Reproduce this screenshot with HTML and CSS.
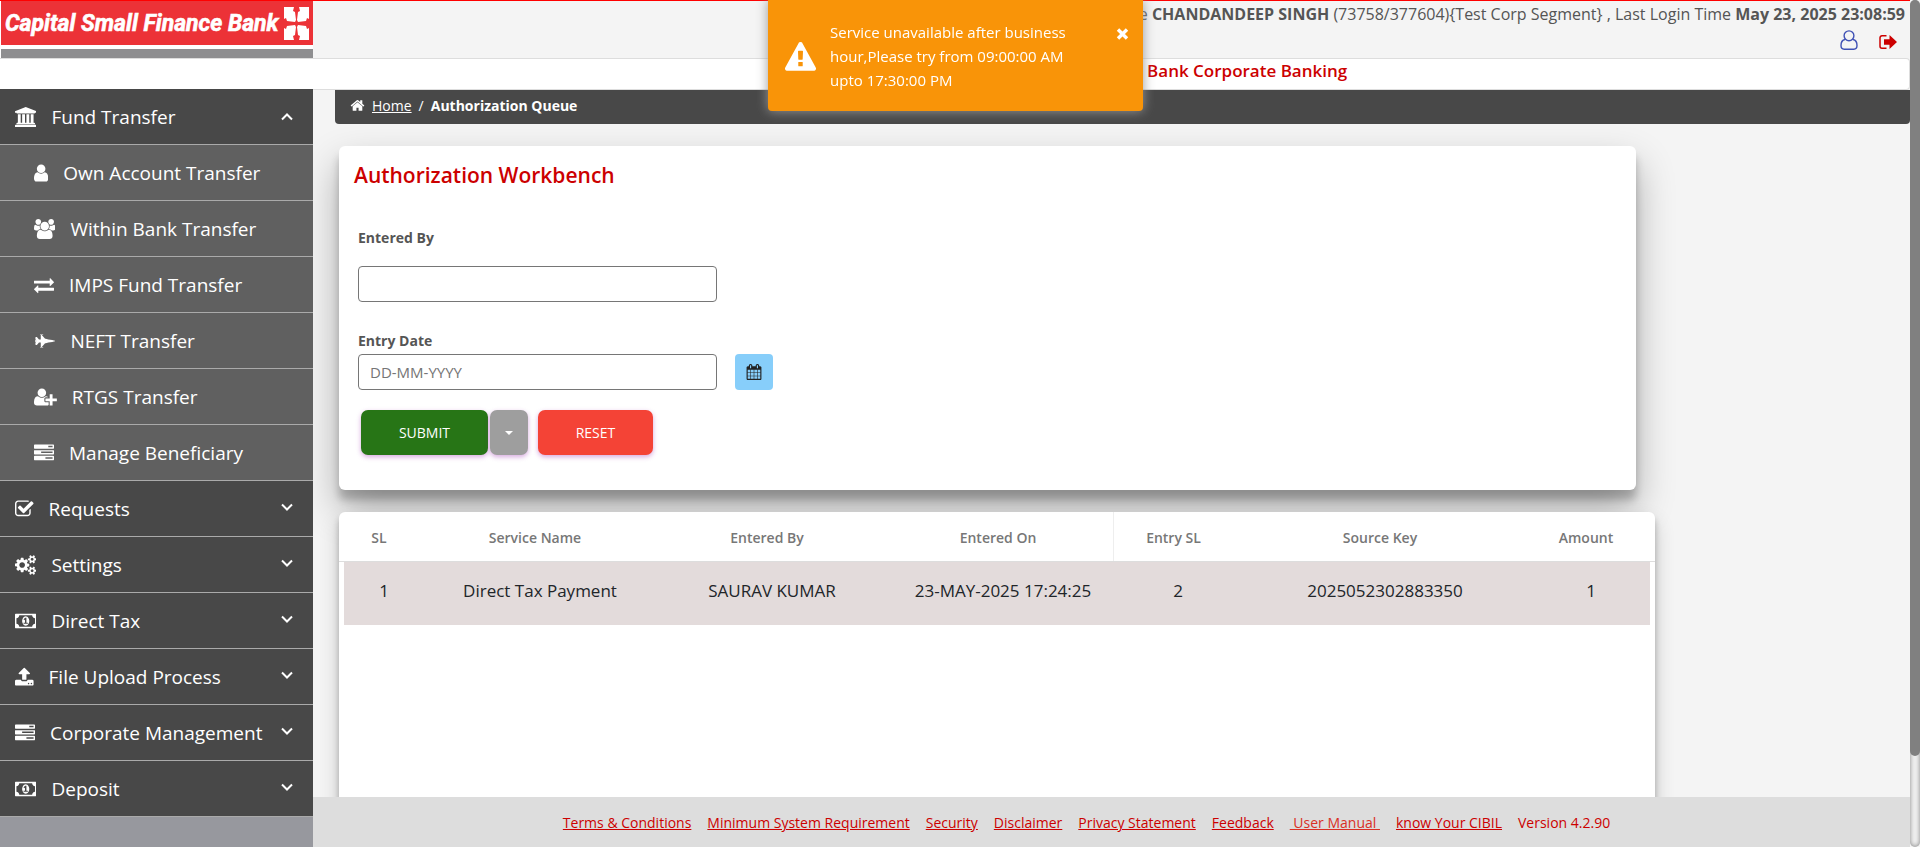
FILE: index.html
```html
<!DOCTYPE html>
<html lang="en">
<head>
<meta charset="utf-8">
<title>Authorization Queue</title>
<link rel="stylesheet" href="styles.css">
</head>
<body>
<svg class="sprite" aria-hidden="true">
  <symbol id="chev-down" viewBox="0 0 12 8"><path d="M1 1.500l5 5 5-5" fill="none" stroke="currentColor" stroke-width="2"/></symbol>
  <symbol id="chev-up" viewBox="0 0 12 8"><path d="M1 6.500l5-5 5 5" fill="none" stroke="currentColor" stroke-width="2"/></symbol>
  <symbol id="tasks" viewBox="0 0 1792 1792"><path d="M1024 1408h640v-128h-640v128zm-384-512h1024v-128h-1024v128zm640-512h384v-128h-384v128zm512 832v256q0 26-19 45t-45 19h-1664q-26 0-45-19t-19-45v-256q0-26 19-45t45-19h1664q26 0 45 19t19 45zm0-512v256q0 26-19 45t-45 19h-1664q-26 0-45-19t-19-45v-256q0-26 19-45t45-19h1664q26 0 45 19t19 45zm0-512v256q0 26-19 45t-45 19h-1664q-26 0-45-19t-19-45v-256q0-26 19-45t45-19h1664q26 0 45 19t19 45z"/></symbol>
  <symbol id="money" viewBox="0 0 1920 1792"><path d="M768 1152h384v-96h-128v-448h-114l-148 137 77 80q42-37 55-57h2v288h-128v96zm512-256q0 70-21 142t-59.500 134-101.500 101-138 39-138-39-101.500-101-59.500-134-21-142 21-142 59.500-134 101.500-101 138-39 138 39 101.500 101 59.500 134 21 142zm512 256v-512q-106 0-181-75t-75-181h-1152q0 106-75 181t-181 75v512q106 0 181 75t75 181h1152q0-106 75-181t181-75zm128-832v1152q0 26-19 45t-45 19h-1792q-26 0-45-19t-19-45v-1152q0-26 19-45t45-19h1792q26 0 45 19t19 45z"/></symbol>
</svg>
<div class="window">
  <div class="page">
    <header class="topbar">
      <svg class="logo" viewBox="0 0 313 58" role="img" aria-label="Capital Small Finance Bank">
        <rect width="313" height="58" fill="#fff"/>
        <rect x="1" width="312" height="44" fill="#ec3237"/>
        <rect x="1" y="48" width="312" height="10" fill="#8e8e90"/>
        <text x="5" y="30" class="logo-text">Capital Small Finance Bank</text>
        <g fill="#fff">
          <path d="M284 6h10l-1 4 2 1 1 8-1 2-8-1-1-3-2 1z"/>
          <path d="M309 6h-10l1 4-2 1-1 8 1 2 8-1 1-3 2 1z"/>
          <path d="M284 39h10l-1-4 2-1 1-8-1-2-8 1-1 3-2-1z"/>
          <path d="M309 39h-10l1-4-2-1-1-8 1-2 8 1 1 3 2-1z"/>
        </g>
      </svg>
      <div class="account">
        <p class="welcome">Welcome <strong>CHANDANDEEP SINGH</strong> (73758/377604){Test Corp Segment} , Last Login Time <strong>May 23, 2025 23:08:59</strong></p>
        <div class="account-actions">
          <a href="#" class="profile" aria-label="Profile"><svg viewBox="0 0 18 20"><circle cx="9" cy="5.800" r="4.900"/><path d="M5 9.500C2.200 10 1 12.500 1 15.500c0 2.500 1 3.700 3.200 3.700h9.600c2.200 0 3.200-1.200 3.200-3.700 0-3-1.200-5.500-4-6"/></svg></a>
          <a href="#" class="logout" aria-label="Log out"><svg viewBox="0 0 18 14"><path d="M7.500.800H3A2 2 0 0 0 1 2.800v8.400a2 2 0 0 0 2 2h4.500" fill="none" stroke="currentColor" stroke-width="1.500"/><path d="M5 4.300h5.500V0L18 7l-7.500 7V9.700H5z" fill="currentColor"/></svg></a>
        </div>
      </div>
    </header>
    <div class="titleband"><h1>Welcome to Capital Small Finance Bank Corporate Banking</h1></div>

    <div class="body">
      <nav class="sidebar" aria-label="Main menu">
        <a href="#"><svg class="i" viewBox="0 0 1920 1792"><path d="M960 0l960 384v128h-128q0 26-20.500 45t-48.500 19H197q-28 0-48.500-19T128 512H0V384zM256 640h256v768h128V640h256v768h128V640h256v768h128V640h256v768h59q28 0 48.500 19t20.500 45v64H128v-64q0-26 20.500-45t48.500-19h59V640zm1595 960q28 0 48.500 19t20.500 45v128H0v-128q0-26 20.500-45t48.500-19h1782z"/></svg><span>Fund Transfer</span><svg class="chev open"><use href="#chev-up"/></svg></a>
        <a href="#" class="sub"><svg class="i" viewBox="256 0 1280 1792"><path d="M1536 1399q0 109-62.500 187t-150.500 78h-854q-88 0-150.500-78t-62.500-187q0-85 8.500-160.500t31.500-152 58.500-131 94-89 134.500-34.500q131 128 313 128t313-128q76 0 134.500 34.500t94 89 58.500 131 31.500 152 8.500 160.500zm-256-887q0 159-112.500 271.500t-271.500 112.500-271.500-112.500-112.500-271.500 112.500-271.500 271.500-112.500 271.500 112.500 112.500 271.500z"/></svg><span>Own Account Transfer</span></a>
        <a href="#" class="sub"><svg class="i" viewBox="0 0 1920 1792"><path d="M593 896q-162 5-265 128h-134q-82 0-138-40.500t-56-118.500q0-353 124-353 6 0 43.500 21t97.500 42.500 119 21.500q67 0 133-23-5 37-5 66 0 139 81 256zm1071 637q0 120-73 189.500t-194 69.500h-874q-121 0-194-69.500t-73-189.500q0-53 3.500-103.500t14-109 26.500-108.500 43-97.500 62-81 85.500-53.500 111.500-20q10 0 43 21.500t73 48 107 48 135 21.500 135-21.500 107-48 73-48 43-21.500q61 0 111.500 20t85.500 53.500 62 81 43 97.500 26.500 108.500 14 109 3.500 103.500zm-1024-1277q0 106-75 181t-181 75-181-75-75-181 75-181 181-75 181 75 75 181zm704 384q0 159-112.500 271.500t-271.500 112.500-271.500-112.500-112.500-271.500 112.500-271.500 271.500-112.500 271.500 112.500 112.500 271.500zm576 225q0 78-56 118.500t-138 40.500h-134q-103-123-265-128 81-117 81-256 0-29-5-66 66 23 133 23 59 0 119-21.500t97.500-42.500 43.500-21q124 0 124 353zm-128-609q0 106-75 181t-181 75-181-75-75-181 75-181 181-75 181 75 75 181z"/></svg><span>Within Bank Transfer</span></a>
        <a href="#" class="sub"><svg class="i" viewBox="0 0 1792 1792"><path d="M1792 1184v192q0 13-9.500 22.500t-22.500 9.500h-1376v192q0 13-9.500 22.500t-22.500 9.500q-12 0-24-10l-319-320q-9-9-9-22 0-14 9-23l320-320q9-9 23-9 13 0 22.500 9.500t9.500 22.500v192h1376q13 0 22.500 9.500t9.500 22.500zm0-544q0 14-9 23l-320 320q-9 9-23 9-13 0-22.500-9.500t-9.500-22.500v-192h-1376q-13 0-22.500-9.500t-9.500-22.500v-192q0-13 9.500-22.500t22.500-9.500h1376v-192q0-14 9-23t23-9q12 0 24 10l319 319q9 9 9 23z"/></svg><span>IMPS Fund Transfer</span></a>
        <a href="#" class="sub"><svg class="i" viewBox="0 0 1920 1792"><path d="M1920 896q-1 32-288 96l-352 32-224 64h-64l-293 352h69q26 0 45 4.500t19 11.500-19 11.500-45 4.500h-224v-32h64v-416h-160l-192 224h-96l-32-32v-192h32v-32h128v-8l-192-24v-128l192-24v-8h-128v-32h-32v-192l32-32h96l192 224h160v-416h-64v-32h224q26 0 45 4.500t19 11.500-19 11.500-45 4.500h-69l293 352h64l224 64 352 32q261 58 287 93z"/></svg><span>NEFT Transfer</span></a>
        <a href="#" class="sub"><svg class="i" viewBox="0 0 2048 1792"><path d="M704 896q-159 0-271.500-112.500t-112.500-271.500 112.500-271.500 271.500-112.500 271.500 112.500 112.500 271.500-112.500 271.500-271.500 112.500zm960 128h352q13 0 22.500 9.500t9.500 22.500v192q0 13-9.500 22.500t-22.500 9.500h-352v352q0 13-9.500 22.500t-22.500 9.500h-192q-13 0-22.500-9.500t-9.500-22.500v-352h-352q-13 0-22.500-9.500t-9.500-22.500v-192q0-13 9.500-22.500t22.500-9.500h352v-352q0-13 9.500-22.500t22.500-9.500h192q13 0 22.500 9.500t9.500 22.500v352zm-736 224q0 52 38 90t90 38h256v238q-68 50-171 50h-874q-121 0-194-69t-73-190q0-53 3.500-103.500t14-109 26.500-108.500 43-97.500 62-81 85.500-53.500 111.500-20q19 0 39 17 79 61 154.500 91.500t164.500 30.500 164.500-30.500 154.500-91.500q20-17 39-17 132 0 217 96h-223q-52 0-90 38t-38 90v192z"/></svg><span>RTGS Transfer</span></a>
        <a href="#" class="sub"><svg class="i" viewBox="0 0 1792 1792"><use href="#tasks"/></svg><span>Manage Beneficiary</span></a>
        <a href="#"><svg class="i" viewBox="64 0 1664 1792"><path d="M1472 930v318q0 119-84.500 203.500t-203.500 84.500h-832q-119 0-203.500-84.500t-84.500-203.500v-832q0-119 84.500-203.500t203.500-84.500h832q63 0 117 25 15 7 18 23 3 17-9 29l-49 49q-10 10-23 10-3 0-9-2-23-6-45-6h-832q-66 0-113 47t-47 113v832q0 66 47 113t113 47h832q66 0 113-47t47-113v-254q0-13 9-22l64-64q10-10 23-10 6 0 12 3 20 8 20 29zm231-489l-814 814q-24 24-57 24t-57-24l-430-430q-24-24-24-57t24-57l110-110q24-24 57-24t57 24l263 263 647-647q24-24 57-24t57 24l110 110q24 24 24 57t-24 57z"/></svg><span>Requests</span><svg class="chev"><use href="#chev-down"/></svg></a>
        <a href="#"><svg class="i" viewBox="0 0 1920 1792"><path d="M896 896q0-106-75-181t-181-75-181 75-75 181 75 181 181 75 181-75 75-181zm768 512q0-52-38-90t-90-38-90 38-38 90q0 53 37.500 90.500t90.500 37.500 90.500-37.500 37.500-90.500zm0-1024q0-52-38-90t-90-38-90 38-38 90q0 53 37.500 90.500t90.500 37.500 90.500-37.500 37.500-90.500zm-384 421v185q0 10-7 19.500t-16 10.500l-155 24q-11 35-32 76 34 48 90 115 7 11 7 20 0 12-7 19-23 30-82.500 89.500t-78.500 59.500q-11 0-21-7l-115-90q-37 19-77 31-11 108-23 155-7 24-30 24h-186q-11 0-20-7.500t-10-17.500l-23-153q-34-10-75-31l-118 89q-7 7-20 7-11 0-21-8-144-133-144-160 0-9 7-19 10-14 41-53t47-61q-23-44-35-82l-152-24q-10-1-17-9.500t-7-19.500v-185q0-10 7-19.500t16-10.500l155-24q11-35 32-76-34-48-90-115-7-11-7-20 0-12 7-20 22-30 82-89t79-59q11 0 21 7l115 90q34-18 77-32 11-108 23-154 7-24 30-24h186q11 0 20 7.500t10 17.500l23 153q34 10 75 31l118-89q8-7 20-7 11 0 21 8 144 133 144 160 0 8-7 19-12 16-42 54t-45 60q23 48 34 82l152 23q10 2 17 10.500t7 19.500zm640 533v140q0 16-149 31-12 27-30 52 51 113 51 138 0 4-4 7-122 71-124 71-8 0-46-47t-52-68q-20 2-30 2t-30-2q-14 21-52 68t-46 47q-2 0-124-71-4-3-4-7 0-25 51-138-18-25-30-52-149-15-149-31v-140q0-16 149-31 13-29 30-52-51-113-51-138 0-4 4-7 4-2 35-20t59-34 30-16q8 0 46 46.500t52 67.500q20-2 30-2t30 2q51-71 92-112l6-2q4 0 124 70 4 3 4 7 0 25-51 138 17 23 30 52 149 15 149 31zm0-1024v140q0 16-149 31-12 27-30 52 51 113 51 138 0 4-4 7-122 71-124 71-8 0-46-47t-52-68q-20 2-30 2t-30-2q-14 21-52 68t-46 47q-2 0-124-71-4-3-4-7 0-25 51-138-18-25-30-52-149-15-149-31v-140q0-16 149-31 13-29 30-52-51-113-51-138 0-4 4-7 4-2 35-20t59-34 30-16q8 0 46 46.500t52 67.500q20-2 30-2t30 2q51-71 92-112l6-2q4 0 124 70 4 3 4 7 0 25-51 138 17 23 30 52 149 15 149 31z"/></svg><span>Settings</span><svg class="chev"><use href="#chev-down"/></svg></a>
        <a href="#"><svg class="i" viewBox="0 0 1920 1792"><use href="#money"/></svg><span>Direct Tax</span><svg class="chev"><use href="#chev-down"/></svg></a>
        <a href="#"><svg class="i" viewBox="64 0 1664 1792"><path d="M1344 1472q0-26-19-45t-45-19-45 19-19 45 19 45 45 19 45-19 19-45zm256 0q0-26-19-45t-45-19-45 19-19 45 19 45 45 19 45-19 19-45zm128-224v320q0 40-28 68t-68 28h-1472q-40 0-68-28t-28-68v-320q0-40 28-68t68-28h427q21 56 70.500 92t110.500 36h256q61 0 110.500-36t70.500-92h427q40 0 68 28t28 68zm-325-648q-17 40-59 40h-256v448q0 26-19 45t-45 19h-256q-26 0-45-19t-19-45v-448h-256q-42 0-59-40-17-39 14-69l448-448q18-19 45-19t45 19l448 448q31 30 14 69z"/></svg><span>File Upload Process</span><svg class="chev"><use href="#chev-down"/></svg></a>
        <a href="#"><svg class="i" viewBox="0 0 1792 1792"><use href="#tasks"/></svg><span>Corporate Management</span><svg class="chev"><use href="#chev-down"/></svg></a>
        <a href="#"><svg class="i" viewBox="0 0 1920 1792"><use href="#money"/></svg><span>Deposit</span><svg class="chev"><use href="#chev-down"/></svg></a>
      </nav>

      <div class="content">
        <main class="main">
          <nav class="breadcrumb" aria-label="Breadcrumb">
            <svg viewBox="0 0 1792 1792"><path d="M1472 992v480q0 26-19 45t-45 19h-384v-384h-256v384h-384q-26 0-45-19t-19-45v-480l1-6 575-474 575 474q1 2 1 6zm223-69l-62 74q-8 9-21 11h-3q-13 0-21-7l-692-577-692 577q-12 8-24 7-13-2-21-11l-62-74q-8-10-7-23.500t11-21.500l719-599q32-26 76-26t76 26l244 204v-195q0-14 9-23t23-9h192q14 0 23 9t9 23v408l219 182q10 8 11 21.500t-7 23.500z"/></svg>
            <a href="#">Home</a><span>/</span><strong>Authorization Queue</strong>
          </nav>

          <form class="card workbench">
            <h2>Authorization Workbench</h2>
            <div class="field">
              <label for="entered-by">Entered By</label>
              <input type="text" id="entered-by" class="spaced">
            </div>
            <div class="field">
              <label for="entry-date">Entry Date</label>
              <div class="date-row">
                <input type="text" id="entry-date" placeholder="DD-MM-YYYY">
                <button type="button" class="calendar" aria-label="Pick a date"><svg viewBox="0 0 1792 1792"><path d="M192 1664h288v-288h-288v288zm352 0h320v-288h-320v288zm-352-352h288v-320h-288v320zm352 0h320v-320h-320v320zm-352-384h288v-288h-288v288zm736 736h320v-288h-320v288zm-384-736h320v-288h-320v288zm768 736h288v-288h-288v288zm-384-352h320v-320h-320v320zm-352-864v-288q0-13-9.500-22.500t-22.500-9.500h-64q-13 0-22.500 9.500t-9.500 22.500v288q0 13 9.500 22.500t22.500 9.500h64q13 0 22.500-9.500t9.500-22.500zm736 864h288v-320h-288v320zm-384-384h320v-288h-320v288zm384 0h288v-288h-288v288zm32-480v-288q0-13-9.500-22.500t-22.500-9.500h-64q-13 0-22.500 9.500t-9.500 22.500v288q0 13 9.500 22.500t22.500 9.500h64q13 0 22.500-9.500t9.500-22.500zm384-64v1280q0 52-38 90t-90 38h-1408q-52 0-90-38t-38-90v-1280q0-52 38-90t90-38h128v-96q0-66 47-113t113-47h64q66 0 113 47t47 113v96h384v-96q0-66 47-113t113-47h64q66 0 113 47t47 113v96h128q52 0 90 38t38 90z"/></svg></button>
              </div>
            </div>
            <div class="actions">
              <button type="button" class="btn submit">SUBMIT</button>
              <button type="button" class="btn more" aria-label="More options"><svg viewBox="0 0 8 4"><path d="M0 0h8L4 4z"/></svg></button>
              <button type="reset" class="btn reset">RESET</button>
            </div>
          </form>

          <section class="card results" aria-label="Queue entries">
            <table>
              <thead>
                <tr><th>SL</th><th>Service Name</th><th>Entered By</th><th>Entered On</th><th class="ruled">Entry SL</th><th>Source Key</th><th>Amount</th></tr>
              </thead>
              <tbody>
                <tr><td>1</td><td>Direct Tax Payment</td><td>SAURAV KUMAR</td><td>23-MAY-2025 17:24:25</td><td>2</td><td>2025052302883350</td><td>1</td></tr>
              </tbody>
            </table>
          </section>
        </main>
        <footer class="footer">
          <a href="#">Terms &amp; Conditions</a>
          <a href="#">Minimum System Requirement</a>
          <a href="#">Security</a>
          <a href="#">Disclaimer</a>
          <a href="#">Privacy Statement</a>
          <a href="#">Feedback</a>
          <a href="#" class="manual">&nbsp;User Manual&nbsp;</a>
          <a href="#">know Your CIBIL</a>
          <span>Version 4.2.90</span>
        </footer>
      </div>
    </div>
  </div>
  <div class="scroll-track"><div class="scroll-thumb"></div></div>
</div>

<div class="toast" role="alert">
  <svg class="warn" viewBox="0 0 1792 1792"><path d="M1024 1375v-190q0-14-9.500-23.500t-22.500-9.500h-192q-13 0-22.500 9.500t-9.500 23.500v190q0 14 9.500 23.500t22.500 9.500h192q13 0 22.500-9.500t9.500-23.500zm-2-374l18-459q0-12-10-19-13-11-24-11h-220q-11 0-24 11-10 7-10 21l17 457q0 10 10 16.500t24 6.500h185q14 0 23.500-6.500t10.500-16.500zm-14-934l768 1408q35 63-2 126-17 29-46.500 46t-63.500 17h-1536q-34 0-63.500-17t-46.500-46q-37-63-2-126l768-1408q17-31 47-49t65-18 65 18 47 49z"/></svg>
  <p>Service unavailable after business hour,Please try from 09:00:00 AM upto 17:30:00 PM</p>
  <button type="button" class="close" aria-label="Close"><svg viewBox="0 0 12 12"><path d="M1.500 1.500l9 9M10.500 1.500l-9 9" stroke="#fff" stroke-width="3.400"/></svg></button>
</div>
</body>
</html>
```

FILE: styles.css
```css
* { box-sizing: border-box; }

body {
  margin: 0;
  font-family: "Open Sans", "Noto Sans", sans-serif;
  font-size: 15px;
  color: #555;
  background: #f4f4f4;
}

p, h1, h2 { margin: 0; }
button, input { font: inherit; }
a { color: inherit; }
svg { display: block; }
.sprite { display: none; }

.window { display: flex; height: 100vh; overflow: hidden; }
.page { flex: 1; min-width: 0; display: flex; flex-direction: column; }

/* Header */
.topbar {
  display: flex;
  justify-content: space-between;
  height: 58px;
  border-top: 1px solid #f00;
  background: #f4f4f4;
}
.logo { width: 313px; height: 58px; flex: none; }
.logo-text {
  font-family: Roboto, "Liberation Sans", sans-serif;
  font-weight: 700;
  font-style: italic;
  font-size: 23px;
  fill: #fff;
  stroke: #fff;
  stroke-width: 0.6px;
}
.account { padding-right: 5px; }
.welcome { font-size: 16px; line-height: 26px; white-space: nowrap; }
.account-actions { display: flex; justify-content: flex-end; align-items: flex-end; gap: 21px; padding-right: 8px; }
.profile svg { width: 18px; height: 20px; margin-top: 3px; fill: none; stroke: #3f51b5; stroke-width: 1.4; }
.logout svg { width: 18px; height: 14px; margin-bottom: 1px; color: #c00; }

.titleband {
  height: 32px;
  padding-left: 313px;
  padding-right: 8px;
  border: 1px solid #ddd;
  border-left: 0;
  border-radius: 0 4px 4px 0;
  background: #fff;
}
.titleband h1 {
  font-size: 17px;
  line-height: 24px;
  font-weight: 600;
  text-align: center;
  color: #c00;
}

/* Sidebar */
.body { flex: 1; display: flex; min-height: 0; }
.sidebar { width: 313px; flex: none; background: #97989e; margin-top: -1px; z-index: 1; }
.sidebar a {
  display: flex;
  align-items: center;
  gap: 15px;
  height: 56px;
  padding: 0 20px 0 15px;
  border-bottom: 1px solid #aaa;
  background: #484848;
  color: #fff;
  font-size: 19px;
  text-decoration: none;
}
.sidebar a.sub { padding-left: 34px; background: #606060; }
.sidebar .i { height: 20px; width: auto; flex: none; fill: currentColor; }
.sidebar .chev { width: 12px; height: 8px; margin: 0 0 4px auto; flex: none; }
.sidebar .chev.open { margin-bottom: 0; }
.sidebar span { white-space: nowrap; }

/* Content */
.content { flex: 1; min-width: 0; display: flex; flex-direction: column; }
.main { flex: 1; min-height: 0; padding-left: 22px; overflow: hidden; }
.breadcrumb {
  display: flex;
  align-items: center;
  gap: 7px;
  height: 34px;
  padding: 0 0 4px 15px;
  border-radius: 0 0 4px 4px;
  background: #484848;
  color: #fff;
  font-size: 14px;
}
.breadcrumb svg { width: 15px; height: 15px; fill: #fff; }

.card { border-radius: 6px; background: #fff; }
.workbench {
  position: relative;
  height: 344px;
  margin: 22px 274px 22px 4px;
  padding: 14px 19px 0;
  box-shadow: 0 19px 38px rgba(0, 0, 0, .3), 0 10px 8px rgba(0, 0, 0, .22);
}
.workbench h2 {
  margin: 0 0 35px -4px;
  font-size: 21px;
  line-height: 30px;
  font-weight: 600;
  color: #c00;
}
.workbench label { display: block; font-size: 14px; line-height: 26px; font-weight: 700; }
.field { margin-bottom: 26px; }
.field input {
  display: block;
  width: 359px;
  height: 36px;
  padding: 0 11px;
  border: 1px solid #767676;
  border-radius: 4px;
  background: #fff;
  color: #333;
}
.field input.spaced { margin-top: 15px; }
.field input::placeholder { color: #757575; }
.date-row { display: flex; gap: 18px; }
.calendar {
  width: 38px;
  height: 36px;
  padding: 0;
  border: 0;
  border-radius: 4px;
  background: #87cefa;
}
.calendar svg { width: 16px; height: 16px; margin: 0 auto; fill: #222; }
.actions { display: flex; margin: -6px 0 0 3px; }
.btn {
  height: 45px;
  padding: 0;
  border: 0;
  border-radius: 7px;
  color: #fff;
  font-size: 14px;
  box-shadow: 0 2px 5px rgba(156, 39, 176, .4);
}
.submit { width: 127px; background: #277516; }
.more { width: 38px; margin: 0 10px 0 2px; background: #9e9e9e; }
.more svg { width: 8px; height: 4px; margin: 0 auto; fill: #fff; }
.reset { width: 115px; background: #f44336; }

.results {
  position: relative;
  height: 344px;
  margin: 0 255px 0 4px;
  box-shadow: 0 10px 20px rgba(0, 0, 0, .19), 0 6px 6px rgba(0, 0, 0, .23);
}
.results table, .results thead, .results tbody { display: block; }
.results tr { display: grid; grid-template-columns: 80fr 232fr 232fr 230fr 120fr 294fr 118fr; }
.results thead { padding-right: 10px; border-bottom: 1px solid #ddd; }
.results th { padding: 3px 0 0; line-height: 46px; font-size: 14px; font-weight: 600; color: #777; }
.results .ruled { border-left: 1px solid #eee; }
.results tbody { margin: 0 5px; background: #e3dbdb; }
.results td { height: 63px; padding: 0; line-height: 58px; font-size: 17px; text-align: center; color: #212529; }

/* Footer */
.footer {
  position: relative;
  z-index: 1;
  display: flex;
  justify-content: center;
  gap: 16px;
  height: 50px;
  padding-right: 50px;
  background: #ddd;
  color: #c00;
  font-size: 14px;
  line-height: 52px;
  white-space: nowrap;
}
.footer .manual { color: #d93025; }

/* Scrollbar */
.scroll-track {
  width: 10px;
  flex: none;
  border-radius: 10px;
  background: #f1f1f1;
  box-shadow: inset 0 0 5px #808080;
}
.scroll-thumb { height: 89.2%; border-radius: 10px; background: #808080; }

/* Notification */
.toast {
  position: fixed;
  top: 0;
  left: 40%;
  z-index: 10;
  display: flex;
  align-items: center;
  width: 375px;
  height: 111px;
  padding-left: 17px;
  border-radius: 0 0 4px 4px;
  background: #f99408;
  color: #fff;
  box-shadow: 0 0 12px #999;
}
.toast .warn { width: 31px; height: 31px; margin-top: 3px; flex: none; fill: #fff; }
.toast p { width: 250px; margin: 1px 0 0 14px; font-size: 15px; line-height: 24px; }
.toast .close { align-self: flex-start; margin: 28px 0 0 36px; padding: 0; border: 0; background: none; }
.close svg { width: 13px; height: 12px; }
```
